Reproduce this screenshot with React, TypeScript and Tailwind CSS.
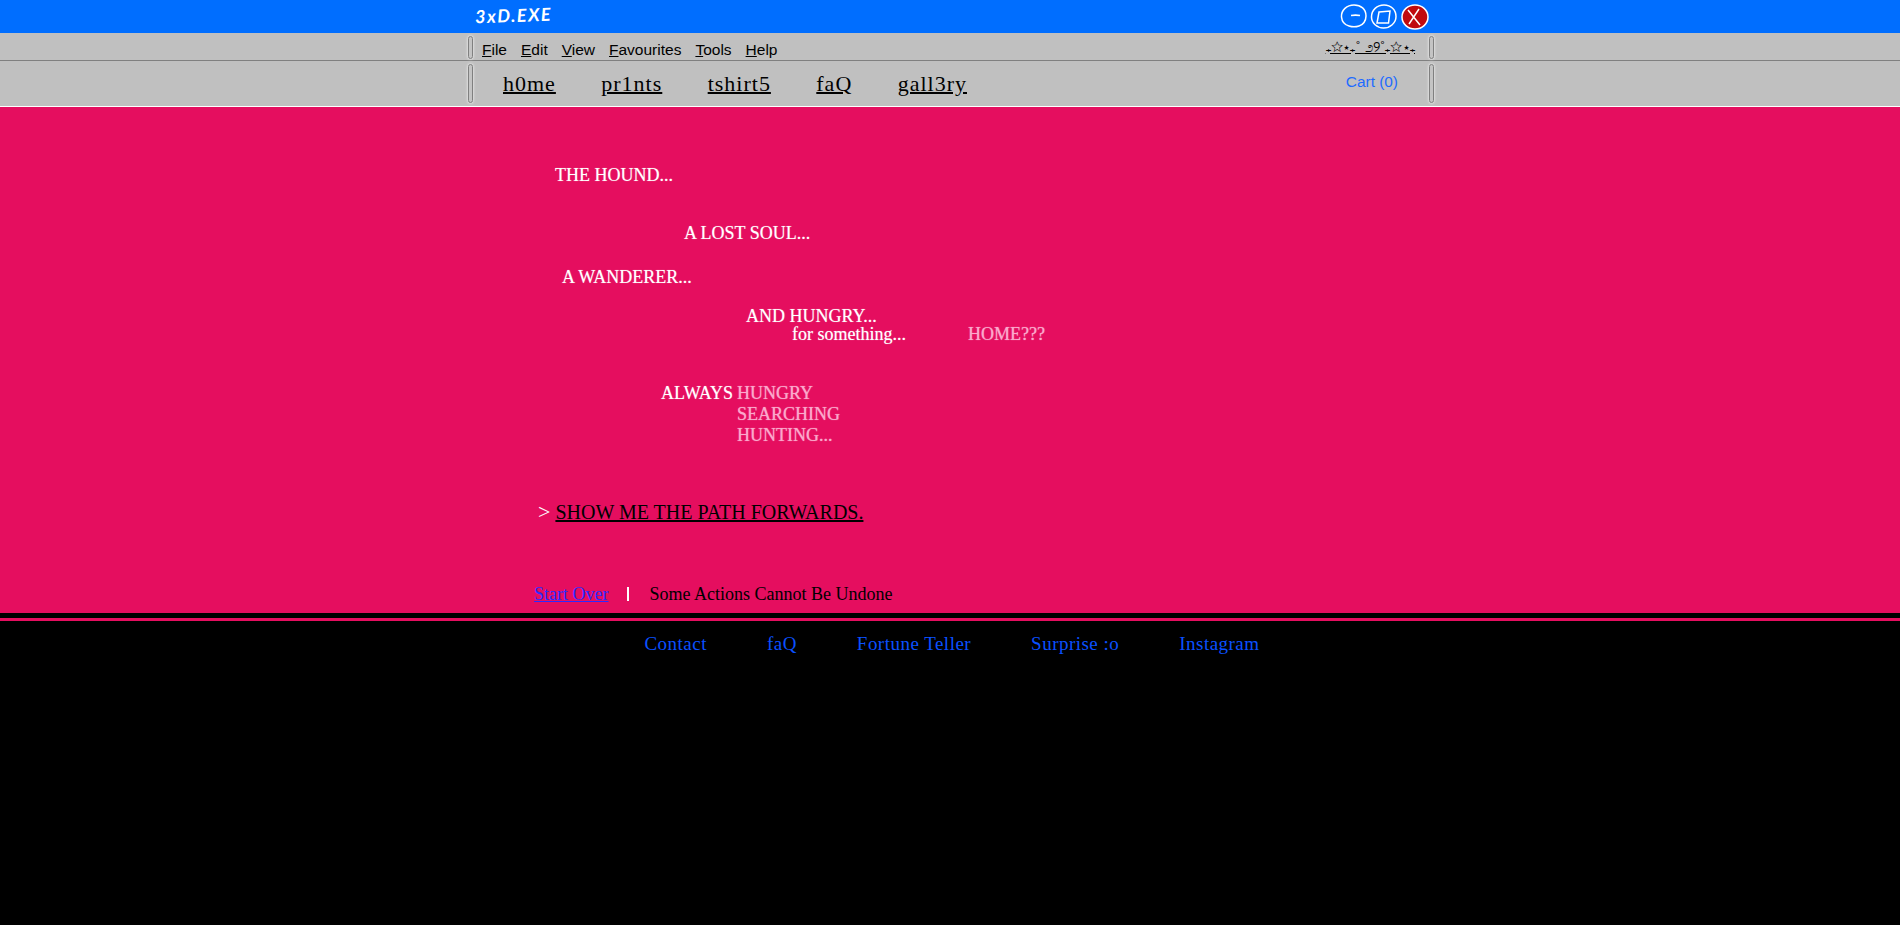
const serif = "font-['Liberation_Serif',serif]";
const glow = '[text-shadow:0_0_1px_rgba(255,255,255,0.55)]';

const menuItems = [
  ['F', 'ile'],
  ['E', 'dit'],
  ['V', 'iew'],
  ['F', 'avourites'],
  ['T', 'ools'],
  ['H', 'elp'],
];

const navLinks = ['h0me', 'pr1nts', 'tshirt5', 'faQ', 'gall3ry'];
const footerLinks = ['Contact', 'faQ', 'Fortune Teller', 'Surprise :o', 'Instagram'];

function Grip() {
  return <div className="w-[5px] self-stretch rounded-full border border-[#808080] bg-[#c4c4c4] shadow-[0_0_3px_#ffffff]" />;
}

function WindowButtons() {
  return (
    <div className="flex items-start gap-[2px] pt-[4px]">
      <svg width="28" height="28" viewBox="0 0 28 28" fill="none" stroke="#fff" strokeWidth="1.5">
        <path d="M1.5 13C1 6 7 1 14 1c7 0 12 4 12 11 0 5-3 9-7 10-3 1-7 1-10 0-4-1-7-4-7.500-9z" />
        <path d="M11 11.500c3-.5 6-.5 9 0" />
      </svg>
      <svg width="28" height="28" viewBox="0 0 28 28" fill="none" stroke="#fff" strokeWidth="1.5">
        <path d="M1.500 13C1.500 6 7 1 14 1c7 0 12 5 12 11.500C26 19 20 24 13.500 24 7 24 1.500 19 1.500 13z" />
        <path d="M9 8l11-1-1.500 12H7z" />
      </svg>
      <svg className="ml-[1px]" width="28" height="28" viewBox="0 0 28 28" fill="#c00a0f" stroke="#fff" strokeWidth="1.5">
        <path d="M1 13C1 6 7 1 14 1c7 0 13 5 13 12 0 7-6 12-13 12C7 25 1 20 1 13z" />
        <path d="M7 6l12 15M18 5L8 20" fill="none" />
      </svg>
    </div>
  );
}

export default function App() {
  return (
    <div className="min-h-[925px] bg-black">
      <div className="flex h-[33px] justify-center bg-[#006eff]">
        <div className="flex w-[968px] items-start justify-between pl-[9px] pr-[5px]">
          <span className="-rotate-2 pt-[2px] font-['Lato',sans-serif] text-[18px] font-bold italic tracking-[1.5px] text-white">3xD.EXE</span>
          <WindowButtons />
        </div>
      </div>

      <div className="flex h-[28px] justify-center border-b border-[#808080] bg-[#c0c0c0]">
        <div className="flex w-[968px] items-center justify-between pb-[1px] pl-[2px] pt-[3px]">
          <div className="flex h-full items-center">
            <Grip />
            <div className="ml-[9px] mt-[4px] flex gap-[14px] font-['Liberation_Sans',sans-serif] text-[15.500px] text-black">
              {menuItems.map(([key, rest], i) => (
                <span key={i}><span className="underline">{key}</span>{rest}</span>
              ))}
            </div>
          </div>
          <div className="flex h-full items-center gap-[14px]">
            <span className={`${serif} -mt-[1px] text-[15px] tracking-[0.2px] text-black underline`}>₊☆⋆₊˚ ೨୨˚₊☆⋆₊</span>
            <Grip />
          </div>
        </div>
      </div>

      <div className="flex h-[46px] justify-center border-b border-white bg-[#c0c0c0]">
        <div className="flex w-[968px] items-center justify-between py-[3px] pl-[2px]">
          <div className="flex h-full items-center">
            <Grip />
            <div className={`${serif} ml-[30px] flex gap-[45.400px] text-[22px] tracking-[1px] text-black`}>
              {navLinks.map(l => <a key={l} className="underline decoration-2">{l}</a>)}
            </div>
          </div>
          <div className="flex h-full items-center gap-[31px]">
            <span className="-mt-[4px] font-['Liberation_Sans',sans-serif] text-[15.400px] text-[#1e6bff]">Cart (0)</span>
            <Grip />
          </div>
        </div>
      </div>

      <main className={`${serif} flex h-[506px] justify-center bg-[#e50e5f]`}>
        <div className="flex w-[962px] flex-col text-[18px] text-white">
          <p className={`${glow} ml-[86px] mt-[57px] leading-[22px]`}>THE HOUND...</p>
          <p className={`${glow} ml-[215px] mt-[36px] leading-[22px]`}>A LOST SOUL...</p>
          <p className={`${glow} ml-[93px] mt-[22px] leading-[22px]`}>A WANDERER...</p>
          <p className={`${glow} ml-[277px] mt-[18px] leading-[20px]`}>AND HUNGRY...</p>
          <p className={`${glow} ml-[323px] -mt-[1px] leading-[18px]`}>for something...<span className="ml-[62px] text-[#fba8cc]">HOME???</span></p>
          <div className={`${glow} ml-[192px] mt-[40px] flex leading-[21px]`}>
            <span className="mr-[4px]">ALWAYS</span>
            <div className="text-[#fba8cc]">
              <p>HUNGRY</p>
              <p>SEARCHING</p>
              <p>HUNTING...</p>
            </div>
          </div>
          <p className="ml-[69px] mt-[54px] text-[20px] leading-[24px]"><span className="text-[22px]">&gt;</span> <a className="text-black underline decoration-2">SHOW ME THE PATH FORWARDS.</a></p>
          <div className="ml-[65px] mt-[59px] flex items-center leading-[22px]">
            <a className="text-[#2b2bff] underline">Start Over</a>
            <span className="ml-[19px] mr-[20px] h-[14px] w-[2px] bg-[#fff]" />
            <span className="text-black">Some Actions Cannot Be Undone</span>
          </div>
        </div>
      </main>

      <div className="h-[5px] bg-black" />
      <div className="h-[3px] bg-[#e50e5f]" />

      <footer className={`${serif} flex justify-center gap-[60px] pl-[4px] pt-[9px] text-[19px] tracking-[0.480px] text-[#0a50ff]`}>
        {footerLinks.map(l => <a key={l}>{l}</a>)}
      </footer>
    </div>
  );
}
